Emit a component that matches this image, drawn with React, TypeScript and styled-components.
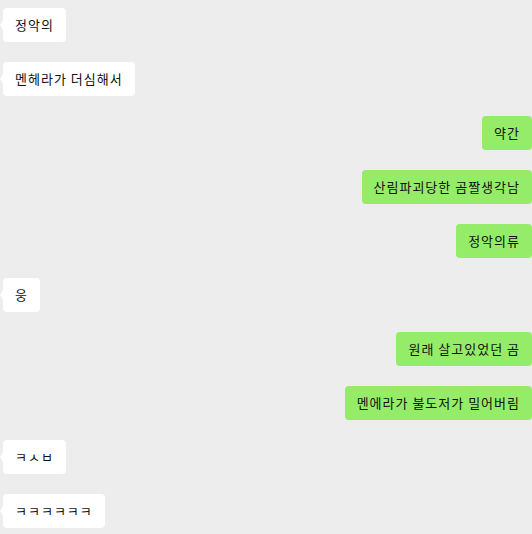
import { createGlobalStyle } from "styled-components";
import styled from "styled-components";

type Side = "left" | "right";

interface Message {
  id: number;
  side: Side;
  text: string;
}

const messages: Message[] = [
  { id: 1, side: "left", text: "정악의" },
  { id: 2, side: "left", text: "멘헤라가 더심해서" },
  { id: 3, side: "right", text: "약간" },
  { id: 4, side: "right", text: "산림파괴당한 곰짤생각남" },
  { id: 5, side: "right", text: "정악의류" },
  { id: 6, side: "left", text: "웅" },
  { id: 7, side: "right", text: "원래 살고있었던 곰" },
  { id: 8, side: "right", text: "멘에라가 불도저가 밀어버림" },
  { id: 9, side: "left", text: "ㅋㅅㅂ" },
  { id: 10, side: "left", text: "ㅋㅋㅋㅋㅋㅋ" },
];

const GlobalStyle = createGlobalStyle`
  html, body {
    margin: 0;
    padding: 0;
    background-color: #ededed;
    font-family: "Noto Sans CJK KR", "Noto Sans", sans-serif;
  }
`;

const ChatLog = styled.div`
  display: flex;
  flex-direction: column;
  gap: 20px;
  padding: 8px 0 0 0;
  width: 532px;
  height: 534px;
  box-sizing: border-box;
  overflow: hidden;
`;

const Row = styled.div<{ $side: Side }>`
  display: flex;
  justify-content: ${(p) => (p.$side === "left" ? "flex-start" : "flex-end")};
  padding-left: 3px;
`;

const Bubble = styled.div<{ $side: Side }>`
  position: relative;
  height: 34px;
  box-sizing: border-box;
  padding: 0 12px;
  display: flex;
  align-items: center;
  font-size: 13px;
  line-height: 18px;
  letter-spacing: 1px;
  color: #111111;
  white-space: nowrap;
  border-radius: 4px;
  background-color: ${(p) => (p.$side === "left" ? "#ffffff" : "#95ec69")};

  &::before {
    content: "";
    position: absolute;
    top: 12px;
    ${(p) => (p.$side === "left" ? "left: -3px;" : "right: -3px;")}
    border-top: 5px solid transparent;
    border-bottom: 5px solid transparent;
    ${(p) =>
      p.$side === "left"
        ? "border-right: 3px solid #ffffff;"
        : "border-left: 3px solid #95ec69;"}
  }
`;

export default function App() {
  return (
    <>
      <GlobalStyle />
      <ChatLog>
        {messages.map((m) => (
          <Row key={m.id} $side={m.side}>
            <Bubble $side={m.side}>{m.text}</Bubble>
          </Row>
        ))}
      </ChatLog>
    </>
  );
}
